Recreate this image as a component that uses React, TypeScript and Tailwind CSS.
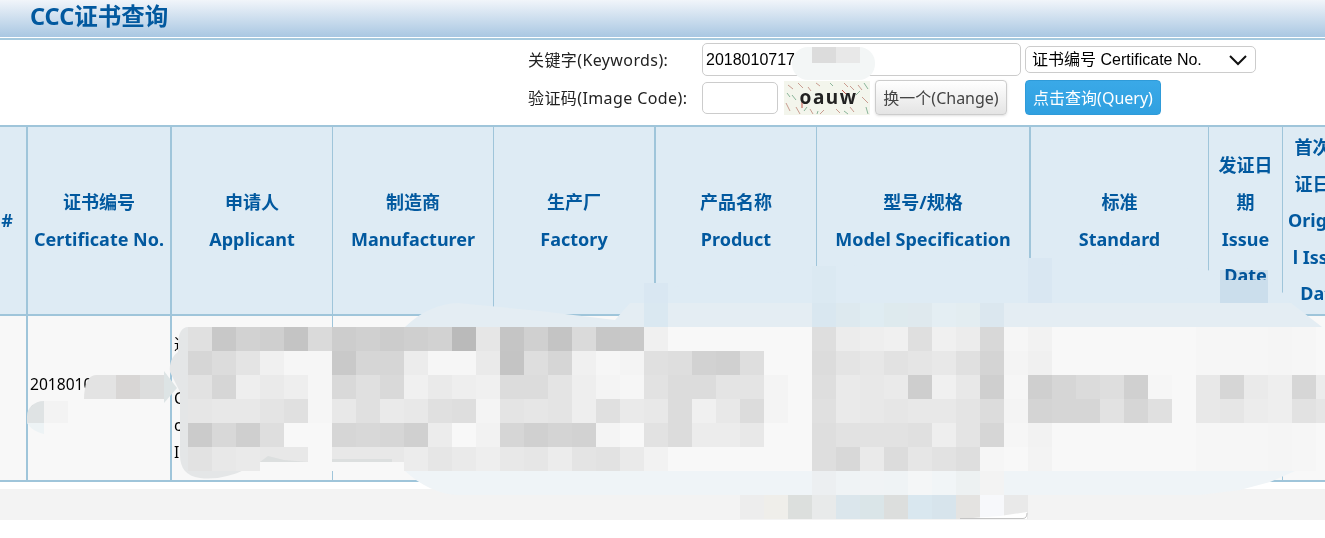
import { useState } from 'react';

const HEAD_CELL = "border-t-2 border-b-2 border-[#9fc5da] bg-[#deebf4] px-1 text-center align-middle text-[18px] leading-[36.6px] font-bold text-[#02599f] [overflow-wrap:anywhere]";
const BODY_CELL = "border-b-2 border-[#9fc5da] bg-[#f8f8f8] px-[2px] align-middle text-[15.6px] leading-[27px] text-black";

const COLUMNS = [
  { zh: '', en: '#', w: 'w-[40px]', border: 'border-r-2' },
  { zh: '证书编号', en: 'Certificate No.', w: 'w-[144px]', border: 'border-r-2' },
  { zh: '申请人', en: 'Applicant', w: 'w-[161px]', border: 'border-r' },
  { zh: '制造商', en: 'Manufacturer', w: 'w-[161px]', border: 'border-r' },
  { zh: '生产厂', en: 'Factory', w: 'w-[162px]', border: 'border-r-2' },
  { zh: '产品名称', en: 'Product', w: 'w-[161px]', border: 'border-r' },
  { zh: '型号/规格', en: 'Model Specification', w: 'w-[214px]', border: 'border-r-2' },
  { zh: '标准', en: 'Standard', w: 'w-[178px]', border: 'border-r' },
  { zh: '发证日期', en: 'Issue Date', w: 'w-[74px]', border: 'border-r' },
  { zh: '首次发证日期', en: 'Original Issue Date', w: 'w-[78px]', border: 'border-r' },
];

// 打码区域:每格 24px,从 x=188 开始,灰度值
const MOSAIC: { y: number; cells: string }[] = [
  { y: 327, cells: 'e0 c8 d2 cf c4 da cd d0 cc cf d2 ba e6 c5 d0 c4 da c7 c8 f0 f8 f8 f8 f8 f8 f8 de ec ee f0 df f0 ec d8 f6 f2 f8 f8 f8 f8 f8 f8 f6 f6 f6 f5 f6 f8' },
  { y: 351, cells: 'd6 dc e4 f0 f6 f6 c9 d6 d6 ec f6 f6 ea c4 de d6 f0 f6 f4 e0 de d2 d0 de f8 f8 dc e4 e7 e2 e5 e8 e0 d4 f4 f0 f8 f8 f8 f8 f8 f8 f6 f6 f6 f5 f6 f8' },
  { y: 375, cells: 'e2 d6 ee ea ee f6 d9 e0 d9 f0 ea ee f0 dc dc e4 ee f4 f6 e2 dc dc e4 e4 f4 f8 de ea e8 ea ce f0 e8 cf f6 cf d6 db de d0 f6 f8 e8 d6 ea ee d6 ec' },
  { y: 399, cells: 'e6 e8 e8 e4 e0 f6 e8 e0 ea e8 e0 de f4 e4 e6 e4 ee e0 ea e8 dc f0 e8 dc f4 f8 e0 ea e8 e6 e8 e8 e4 dc f4 d4 d6 d6 e2 d6 e0 f8 e8 e6 ec ee e2 e6' },
  { y: 423, cells: 'cb d8 cf de f8 f8 d6 d8 d6 d0 ec f8 f2 d6 d0 d4 d2 f4 f8 e2 dc ec ec e8 f8 f8 de e2 e2 e2 e0 ee e4 d6 f6 f2 f8 f8 f8 f8 f8 f8 f6 f6 f6 f5 f6 f8' },
  { y: 447, cells: 'e2 e8 ea e8 e8 f8 e8 e8 e8 ec e6 ea ee e8 e6 ec e4 e2 ea f2 f8 f8 f8 f8 f8 f8 de d8 ea dc e6 e2 de f6 f8 f3 f8 f8 f8 f8 f8 f8 f6 f6 f6 f5 f6 f8' },
];

const BAND_TOP = ['#d9e7f0', '#dde9ef', '#dfecf2', '#deeaee', '#dfe9ee', '#e4eef3', '#e3edf1', '#dbe7ef'];
const BAND_LOW = ['#eceff1', '#eff3f5', '#f0f3f5', '#eff3f5', '#f4f6f7', '#f1f5f7', '#edf1f2', '#f3f3f3'];
const BOTTOM_ROW = ['#ededed', '#efeeea', '#dcdfdd', '#e8eaea', '#dbe6ec', '#dae5e8', '#dcdedd', '#d9e7ef', '#d7e4ec', '#e4e3e1', '#f7f8fb', '#e9e9e9'];

function Overlay() {
  return (
    <svg className="absolute left-0 top-0 pointer-events-none" width="1325" height="538">
      {/* 关键字打码 */}
      <rect x="792" y="47" width="83" height="33" rx="16" fill="#f3f6f6" />
      <rect x="812" y="47" width="24" height="16" fill="#dcdcdc" />
      <rect x="836" y="47" width="24" height="16" fill="#e8e8e8" />

      {/* 表头上方的浅色涂抹 */}
      <path d="M630 303 L644 288 L668 288 L816 267 L1030 258 L1208 270 L1222 280 L1268 280 L1282 292 L1291 303 Z" fill="#deebf4" />
      <rect x="644" y="283" width="24" height="20" fill="#d9e7f2" />
      <rect x="812" y="266" width="24" height="37" fill="#dbe9f2" />
      <rect x="1028" y="258" width="24" height="45" fill="#d9e7f2" />
      <rect x="1220" y="270" width="48" height="10" fill="#e9f1f7" className="mix-blend-multiply" />
      <rect x="1220" y="280" width="48" height="23" fill="#cbdeec" />
      <path d="M405 327 C420 312 440 303 458 303 L540 311 L615 320 L630 303 L1291 303 L1322 327 Z" fill="#e4edf3" />
      {BAND_TOP.map((c, i) => <rect key={i} x={812 + i * 24} y="303" width="24" height="24" fill={c} />)}
      <rect x="644" y="303" width="24" height="24" fill="#dae8f1" />

      {/* 证书编号打码 */}
      <path d="M84 399 C84 385 88 375 96 375 L164 375 L164 399 Z" fill="#e3e3e3" />
      <rect x="116" y="375" width="24" height="24" fill="#d8d6d5" />
      <rect x="140" y="375" width="24" height="24" fill="#dcdddd" />
      <path d="M164 371 L177 388 L164 403 Z" fill="#dde4e5" />
      <path d="M44 401 L44 423 L27 423 L27 416 C27 408 34 401 44 401 Z" fill="#dfe3e4" />
      <rect x="44" y="401" width="24" height="22" fill="#f3f3f3" />
      <path d="M27 423 L44 423 L44 434 C36 432 30 428 27 423 Z" fill="#edf3f5" />

      {/* 申请人左侧圆边 */}
      <path d="M188 327 C182 327 178 333 178 345 L178 352 C172 356 169 364 170 372 L180 392 L180 455 C180 468 186 476 200 478 C215 480 232 476 244 470 L188 470 Z" fill="#e4e6e7" />

      {MOSAIC.map(row =>
        row.cells.split(' ').map((g, i) => (
          <rect key={`${row.y}-${i}`} x={188 + i * 24} y={row.y} width="24" height="24" fill={`#${g}${g}${g}`} />
        ))
      )}
      <rect x="260" y="462" width="48" height="9" fill="#f8f8f8" />
      <rect x="332" y="462" width="72" height="9" fill="#f8f8f8" />
      <path d="M260 462 L268 456 L284 460 L308 462 Z" fill="#dcdfdf" />
      <rect x="332" y="459" width="60" height="3" fill="#dcdfdf" />

      {/* 底部涂抹 */}
      <path d="M405 471 C420 485 440 495 458 495 L1200 495 L1240 490 L1270 482 L1295 471 Z" fill="#eff4f7" />
      {BAND_LOW.map((c, i) => <rect key={i} x={812 + i * 24} y="471" width="24" height="24" fill={c} />)}
      {BOTTOM_ROW.map((c, i) => <rect key={i} x={740 + i * 24} y="495" width="24" height="24" fill={c} />)}
      <path d="M959 519 L1027 519 L1027 512 L1000 516 Z" fill="#fff" />
      <path d="M960 518.5 L1023 518.5 C1026 518.5 1027 516 1027 513" fill="none" stroke="#c4c4c4" />
    </svg>
  );
}

function Captcha() {
  return (
    <div className="relative ml-[6px] flex h-[34px] w-[86px] items-center justify-center overflow-hidden bg-[#f3f5ec]">
      <svg className="absolute inset-0" width="86" height="34">
        <path d="M4 4 L9 8 M14 2 L19 7 M2 22 L6 30 M12 26 L16 33 M26 28 L29 33 M40 29 L36 33 M52 28 L56 32 M66 26 L70 31 M74 4 L78 9 M60 2 L64 6 M78 16 L84 22 M32 2 L36 5 M66 5 L70 9 M24 6 L27 10" stroke="#c99c90" strokeWidth="1" />
        <path d="M8 14 L12 19 M20 30 L23 26 M46 2 L49 5 M72 14 L76 10 M82 26 L84 33 M60 30 L64 33 M80 2 L84 8 M3 12 L6 16 M34 30 L33 33" stroke="#8ab59a" strokeWidth="1" />
        <path d="M18 21 L18 27 M58 9 L62 13" stroke="#c2554a" strokeWidth="1" />
      </svg>
      <span className="relative ml-[3px] text-[19px] leading-none font-bold tracking-[1.5px] text-[#222]">oauw</span>
    </div>
  );
}

export default function App() {
  const [keyword, setKeyword] = useState('2018010717');
  const [code, setCode] = useState('');

  return (
    <div className="relative h-[538px] w-[1325px] overflow-hidden bg-white font-['Noto_Sans','Noto_Sans_CJK_SC',sans-serif]">
      {/* 标题栏 */}
      <div className="h-[37px] bg-gradient-to-b from-[#f1f5fa] to-[#a9c7e2] pl-[30px]">
        <h1 className="text-[23.5px] leading-[32px] font-bold text-[#02599f]">CCC证书查询</h1>
      </div>
      <div className="mt-[1px] h-[2px] bg-[#a5c9de]" />

      {/* 查询表单 */}
      <form className="pt-[3px] pb-[10px] pl-[528px] text-[16px] text-[#222]" onSubmit={e => e.preventDefault()}>
        <div className="flex h-[33px] items-center">
          <label className="w-[174px] tracking-[0.4px]">关键字(Keywords):</label>
          <input
            value={keyword}
            onChange={e => setKeyword(e.target.value)}
            className="h-[33px] w-[319px] rounded-[5px] border border-[#ccc] px-[3px] font-['Liberation_Sans','Noto_Sans_CJK_SC',sans-serif] text-[16px] text-black outline-none"
          />
          <div className="relative ml-[4px]">
            <select className="h-[27px] w-[231px] appearance-none rounded-[5px] border border-[#ccc] bg-white pl-[6px] font-['Liberation_Sans','Noto_Sans_CJK_SC',sans-serif] text-[16px] text-black outline-none">
              <option>证书编号 Certificate No.</option>
              <option>申请人 Applicant</option>
            </select>
            <svg className="pointer-events-none absolute top-[8px] right-[8px]" width="20" height="12" viewBox="0 0 20 12">
              <path d="M2 2 L10 10 L18 2" fill="none" stroke="#111" strokeWidth="2" />
            </svg>
          </div>
        </div>
        <div className="mt-[4px] flex h-[35px] items-center">
          <label className="w-[174px] tracking-[0.4px]">验证码(Image Code):</label>
          <input
            value={code}
            onChange={e => setCode(e.target.value)}
            className="h-[32px] w-[76px] rounded-[5px] border border-[#ccc] px-[4px] outline-none"
          />
          <Captcha />
          <button type="button" className="ml-[5px] h-[35px] w-[132px] rounded-[4px] border border-[#ccc] bg-gradient-to-b from-white to-[#e4e4e4] text-[16px] text-[#444] shadow-sm">
            换一个(Change)
          </button>
          <button type="submit" className="ml-[18px] h-[35px] w-[136px] rounded-[4px] border border-[#2f9bd9] bg-gradient-to-b from-[#3aa9e8] to-[#30a0e0] text-[16px] text-white">
            点击查询(Query)
          </button>
        </div>
      </form>

      {/* 结果表格 */}
      <table className="-ml-[12px] w-[1373px] table-fixed border-separate border-spacing-0">
        <thead>
          <tr className="h-[191px]">
            {COLUMNS.map(c => (
              <th key={c.en} className={`${HEAD_CELL} ${c.w} ${c.border}`}>
                {c.zh && <div>{c.zh}</div>}
                <div>{c.en}</div>
              </th>
            ))}
          </tr>
        </thead>
        <tbody>
          <tr className="h-[166px]">
            <td className={`${BODY_CELL} border-r-2 border-r-[#9fc5da]`} />
            <td className={`${BODY_CELL} border-r-2 border-r-[#9fc5da]`}>
              <div>2018010717</div>
              <div>0000</div>
            </td>
            <td className={`${BODY_CELL} border-r border-r-[#9fc5da]`}>
              <div>通</div>
              <div>地</div>
              <div>C</div>
              <div>c</div>
              <div>I</div>
            </td>
            <td className={`${BODY_CELL} border-r border-r-[#9fc5da]`} />
            <td className={`${BODY_CELL} border-r-2 border-r-[#9fc5da]`} />
            <td className={`${BODY_CELL} border-r border-r-[#9fc5da]`} />
            <td className={`${BODY_CELL} border-r-2 border-r-[#9fc5da]`} />
            <td className={`${BODY_CELL} border-r border-r-[#9fc5da]`} />
            <td className={`${BODY_CELL} border-r border-r-[#9fc5da]`} />
            <td className={`${BODY_CELL} border-r border-r-[#9fc5da]`} />
          </tr>
        </tbody>
      </table>

      {/* 底部灰条 */}
      <div className="mt-[7px] h-[31px] bg-[#f3f3f3]" />

      <Overlay />
    </div>
  );
}
